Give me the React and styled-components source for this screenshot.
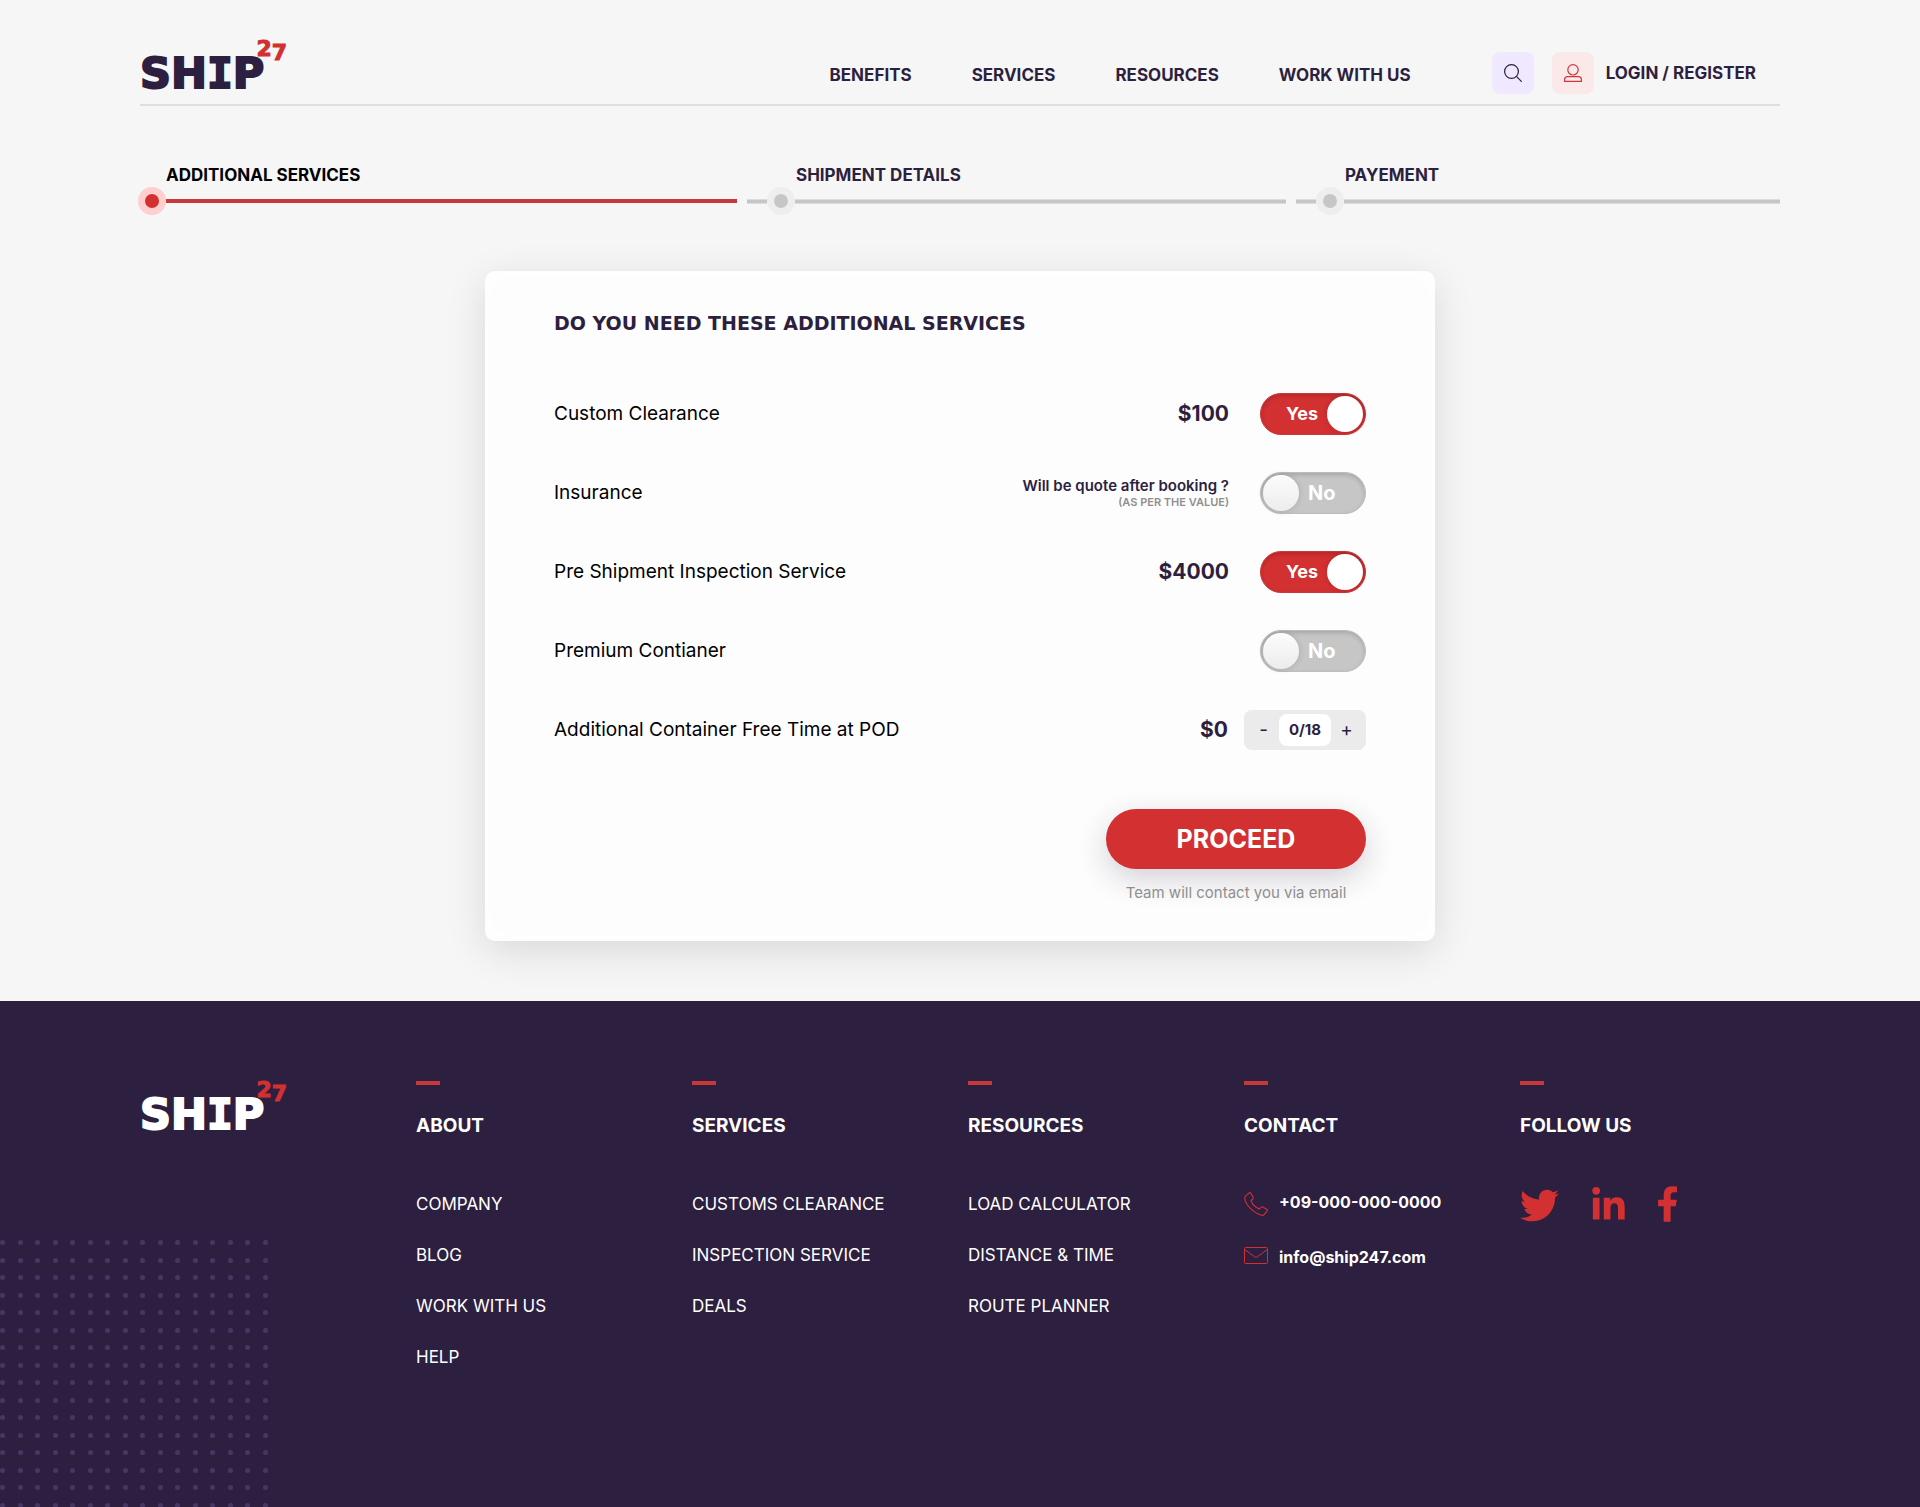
import React, { useState } from "react";
import styled, { createGlobalStyle, css } from "styled-components";
import { FaTwitter, FaLinkedinIn } from "react-icons/fa";

const color = {
  ink: "#2d1f3f",
  red: "#d33031",
  page: "#f6f6f6",
  grey: "#c6c6c6",
  muted: "#8f8f8f",
};

const GlobalStyle = createGlobalStyle`
  * { box-sizing: border-box; }
  body {
    margin: 0;
    background: ${color.page};
    color: ${color.ink};
    font-family: Inter, "Liberation Sans", sans-serif;
    font-size: 17px;
    line-height: 20px;
  }
  a { color: inherit; text-decoration: none; }
  button, input { font: inherit; color: inherit; }
  h1, h2, ul { margin: 0; padding: 0; }
  ul { list-style: none; }
`;

const Container = styled.div`
  width: calc(100% - 80px);
  max-width: 1640px;
  margin: 0 auto;
`;

/* Logo */

const LogoLink = styled.a`
  display: flex;
  align-items: flex-end;
  align-self: flex-start;
  height: 48px;
  color: ${(p) => (p.$light ? "#fff" : color.ink)};
  font-family: "DejaVu Sans", sans-serif;
  font-weight: 700;
`;

const Wordmark = styled.span`
  font-size: 43px;
  line-height: 30px;
  -webkit-text-stroke: 2px currentColor;
`;

const SlabLetter = styled.span`
  font-family: "DejaVu Sans Mono", monospace;
`;

const LogoNumber = styled.span`
  display: flex;
  align-self: flex-start;
  margin-left: -8px;
  color: ${color.red};
  font-size: 22px;
  line-height: 17px;
  -webkit-text-stroke: 1px currentColor;
`;

const LoweredDigit = styled.span`
  padding-top: 4px;
`;

function Logo({ light }) {
  return (
    <LogoLink href="#" $light={light}>
      <Wordmark>
        SH<SlabLetter>I</SlabLetter>P
      </Wordmark>
      <LogoNumber>
        <span>2</span>
        <LoweredDigit>7</LoweredDigit>
      </LogoNumber>
    </LogoLink>
  );
}

/* Header */

const Header = styled.header`
  display: flex;
  align-items: flex-end;
  justify-content: space-between;
  min-height: 106px;
  padding: 40px 24px 10px 0;
  border-bottom: 2px solid #dedede;
`;

const HeaderRight = styled.div`
  display: flex;
  align-items: center;
  font-weight: 700;
`;

const Nav = styled.nav`
  display: flex;
  gap: 60px;
  margin-right: 81px;
  padding-top: 4px;
`;

const IconBox = styled.span`
  display: flex;
  align-items: center;
  justify-content: center;
  width: 42px;
  height: 42px;
  border-radius: 8px;
  background: ${(p) => (p.$tone === "red" ? "#fbe8e8" : "#f0e8ff")};
  color: ${(p) => (p.$tone === "red" ? "#c9393c" : color.ink)};
`;

const SearchButton = styled.button`
  padding: 0;
  border: 0;
  background: none;
  cursor: pointer;
`;

const LoginLink = styled.a`
  display: flex;
  align-items: center;
  gap: 12px;
  margin-left: 18px;
`;

const SearchIcon = () => (
  <svg width="18" height="18" viewBox="0 0 18 18" fill="none" stroke="currentColor" strokeWidth="1.2">
    <circle cx="7.500" cy="7.500" r="6.900" />
    <path d="M12.400 12.400 17.700 17.700" />
  </svg>
);

const UserIcon = () => (
  <svg width="18" height="18" viewBox="0 0 18 18" fill="none" stroke="currentColor" strokeWidth="1.2">
    <circle cx="9" cy="5.800" r="5.200" />
    <path d="M.6 17.400v-1.900a2.800 2.800 0 0 1 2.800-2.800h11.200a2.800 2.800 0 0 1 2.800 2.800v1.900z" />
  </svg>
);

/* Progress steps */

const Steps = styled.ol`
  display: grid;
  grid-template-columns: 597fr 539fr 484fr;
  gap: 10px;
  margin: 0;
  padding: 59px 0 56px;
  list-style: none;
`;

const Step = styled.li`
  display: flex;
  flex-direction: column;
  gap: 2px;
  color: ${(p) => (p.$active ? "#000" : color.ink)};
  font-weight: 700;
`;

const StepLabel = styled.span`
  padding-left: ${(p) => (p.$active ? 26 : 49)}px;
`;

const Track = styled.span`
  display: flex;
  align-items: center;
  margin-left: ${(p) => (p.$active ? -2 : 0)}px;
`;

const TrackLine = styled.span`
  flex: ${(p) => (p.$lead ? "0 0 20px" : "1")};
  height: ${(p) => (p.$active ? 4 : 5)}px;
  background: ${(p) => (p.$active ? "#c9393c" : color.grey)};
  ${(p) =>
    !p.$active &&
    css`
      border: solid #dcdcdc;
      border-width: 1px 0;
    `}
`;

const Dot = styled.span`
  width: 28px;
  height: 28px;
  border: 7px solid ${(p) => (p.$active ? "#ffcfd0" : "#eeeeee")};
  border-radius: 50%;
  background: ${(p) => (p.$active ? color.red : color.grey)};
`;

const steps = [
  { label: "ADDITIONAL SERVICES", active: true },
  { label: "SHIPMENT DETAILS", active: false },
  { label: "PAYEMENT", active: false },
];

/* Services card */

const Card = styled.form`
  width: 100%;
  max-width: 950px;
  margin: 0 auto 60px;
  padding: 40px 69px 38px;
  border-radius: 10px;
  background: #fdfdfd;
  box-shadow: 0 10px 40px rgba(0, 0, 0, 0.12), inset 0 0 24px #fff;
`;

const Title = styled.h1`
  margin-bottom: 39px;
  font-family: "DejaVu Sans", sans-serif;
  font-size: 19px;
  line-height: 24px;
`;

const Row = styled.div`
  display: flex;
  align-items: center;
  height: 79px;
`;

const RowLabel = styled.label`
  flex: 1;
  color: #000;
  font-size: 19px;
  line-height: 24px;
`;

const Price = styled.span`
  margin-right: ${(p) => (p.$tight ? 16 : 31)}px;
  font-size: 21px;
  font-weight: 700;
`;

const Quote = styled.span`
  display: flex;
  flex-direction: column;
  margin-right: 31px;
  font-size: 15px;
  font-weight: 600;
  line-height: 18px;
  text-align: right;
`;

const QuoteNote = styled.small`
  color: ${color.muted};
  font-size: 11px;
  font-weight: 600;
  line-height: 14px;
`;

const SwitchLabel = styled.label`
  position: relative;
  display: flex;
  align-items: center;
  justify-content: ${(p) => (p.$on ? "flex-end" : "flex-start")};
  gap: 9px;
  width: 106px;
  height: 42px;
  padding: 0 2px;
  border: 1px solid ${(p) => (p.$on ? "#c9393c" : "#bdbdbd")};
  border-radius: 21px;
  background: ${(p) => (p.$on ? color.red : color.grey)};
  box-shadow: inset 0 2px 4px rgba(0, 0, 0, 0.16);
  color: #fff;
  font-size: ${(p) => (p.$on ? 18 : 20)}px;
  font-weight: 700;
  cursor: pointer;
`;

const SwitchInput = styled.input`
  position: absolute;
  inset: 0;
  width: 100%;
  height: 100%;
  margin: 0;
  opacity: 0;
  cursor: pointer;
`;

const Knob = styled.span`
  order: ${(p) => (p.$on ? 1 : -1)};
  width: 36px;
  height: 36px;
  border-radius: 50%;
  background: ${(p) => (p.$on ? "#fff" : "linear-gradient(#fcfcfc, #ececec)")};
  box-shadow: 0 0 4px 2px rgba(0, 0, 0, 0.08);
`;

function Switch({ id, on, onChange }) {
  return (
    <SwitchLabel $on={on}>
      <SwitchInput id={id} type="checkbox" checked={on} onChange={onChange} />
      <Knob $on={on} />
      <span>{on ? "Yes" : "No"}</span>
    </SwitchLabel>
  );
}

const Stepper = styled.div`
  display: grid;
  grid-template-columns: 31px 52px 31px;
  padding: 4px;
  border-radius: 8px;
  background: #ebebeb;
`;

const StepperButton = styled.button`
  padding: 0;
  border: 0;
  background: none;
  font-size: 19px;
  cursor: pointer;
`;

const StepperValue = styled.input`
  width: 100%;
  height: 32px;
  padding: 0;
  border: 0;
  border-radius: 8px;
  background: #fff;
  font-size: 15px;
  font-weight: 700;
  text-align: center;
`;

const Submit = styled.div`
  display: flex;
  flex-direction: column;
  gap: 14px;
  width: 260px;
  margin: 40px 0 0 auto;
  color: ${color.muted};
  font-size: 15px;
  text-align: center;
`;

const ProceedButton = styled.button`
  height: 60px;
  border: 0;
  border-radius: 30px;
  background: ${color.red};
  box-shadow: 0 10px 30px rgba(45, 31, 63, 0.2);
  color: #fff;
  font-size: 25px;
  font-weight: 700;
  cursor: pointer;
`;

const services = [
  { id: "customs", label: "Custom Clearance", price: "$100", on: true },
  { id: "insurance", label: "Insurance", quote: true, on: false },
  { id: "inspection", label: "Pre Shipment Inspection Service", price: "$4000", on: true },
  { id: "premium", label: "Premium Contianer", on: false },
];

function ServicesCard() {
  const [enabled, setEnabled] = useState(
    Object.fromEntries(services.map((s) => [s.id, s.on]))
  );
  const [days, setDays] = useState(0);
  const toggle = (id) => setEnabled((old) => ({ ...old, [id]: !old[id] }));

  return (
    <Card onSubmit={(e) => e.preventDefault()}>
      <Title>DO YOU NEED THESE ADDITIONAL SERVICES</Title>
      {services.map((s) => (
        <Row key={s.id}>
          <RowLabel htmlFor={s.id}>{s.label}</RowLabel>
          {s.price && <Price>{s.price}</Price>}
          {s.quote && (
            <Quote>
              Will be quote after booking ?<QuoteNote>(AS PER THE VALUE)</QuoteNote>
            </Quote>
          )}
          <Switch id={s.id} on={enabled[s.id]} onChange={() => toggle(s.id)} />
        </Row>
      ))}
      <Row>
        <RowLabel htmlFor="free-time">Additional Container Free Time at POD</RowLabel>
        <Price $tight>$0</Price>
        <Stepper>
          <StepperButton type="button" onClick={() => setDays(Math.max(0, days - 1))}>
            -
          </StepperButton>
          <StepperValue id="free-time" readOnly value={`${days}/18`} />
          <StepperButton type="button" onClick={() => setDays(Math.min(18, days + 1))}>
            +
          </StepperButton>
        </Stepper>
      </Row>
      <Submit>
        <ProceedButton type="submit">PROCEED</ProceedButton>
        <span>Team will contact you via email</span>
      </Submit>
    </Card>
  );
}

/* Footer */

const FooterBar = styled.footer`
  position: relative;
  padding: 80px 0 138px;
  background: ${color.ink};
  color: #fff;
`;

const DotField = styled.svg`
  position: absolute;
  left: 0;
  bottom: 0;
`;

const FooterGrid = styled(Container)`
  position: relative;
  display: grid;
  grid-template-columns: repeat(6, 1fr);
  gap: 16px;
`;

const Column = styled.section`
  &::before {
    content: "";
    display: block;
    width: 24px;
    height: 4px;
    background: #c9393c;
  }
`;

const ColumnTitle = styled.h2`
  margin: 29px 0 54px;
  font-size: 19px;
  font-weight: 700;
  line-height: 24px;
`;

const LinkList = styled.ul`
  display: flex;
  flex-direction: column;
  gap: 27px;
  line-height: 24px;
  white-space: nowrap;
`;

const ContactList = styled(LinkList)`
  gap: 31px;
  font-size: 16px;
  font-weight: 700;
  line-height: 20px;
`;

const ContactLink = styled.a`
  display: flex;
  align-items: flex-start;
  gap: 11px;

  svg {
    color: ${color.red};
  }
`;

const Social = styled.div`
  display: flex;
  align-items: center;
  gap: 31px;
  margin-top: -6px;
  color: ${color.red};

  a,
  svg {
    display: block;
  }

  a:last-child {
    align-self: flex-start;
  }
`;

const PhoneIcon = () => (
  <svg width="24" height="24" viewBox="0 0 24 24" fill="none" stroke="currentColor" strokeWidth="1.1">
    <path d="M6.700.9 9 5c.4.700.3 1.500-.2 2L7 8.800c1.200 3.100 5 6.900 8.300 8.200l1.600-1.700c.5-.5 1.300-.6 1.900-.3l4.300 2.400c.4.300.5.800.2 1.200l-3 3.700c-.7.900-1.700 1.200-2.800 1C10.500 21.500 1.500 13 .8 6.800.6 5.600 1 4.500 1.800 3.800L5.500.8c.4-.3.900-.3 1.200.1z" />
  </svg>
);

const MailIcon = () => (
  <svg width="24" height="17" viewBox="0 0 24 17" fill="none" stroke="currentColor" strokeWidth="1">
    <rect x=".5" y=".5" width="23" height="16" rx="1" />
    <path d="M.8 2.500 10.500 9.800c1 .7 2 .7 3 0L23.200 2.500" />
  </svg>
);

const FacebookIcon = () => (
  <svg width="19" height="36" viewBox="22 0 275 512" fill="currentColor">
    <path d="M279.140 288l14.220-92.660h-88.910v-60.130c0-25.350 12.420-50.060 52.240-50.060h40.420V6.260S260.430 0 225.360 0c-73.220 0-121.080 44.380-121.080 124.720v70.620H22.890V288h81.390v224h100.170V288z" />
  </svg>
);

const linkColumns = [
  { title: "ABOUT", links: ["COMPANY", "BLOG", "WORK WITH US", "HELP"] },
  { title: "SERVICES", links: ["CUSTOMS CLEARANCE", "INSPECTION SERVICE", "DEALS"] },
  { title: "RESOURCES", links: ["LOAD CALCULATOR", "DISTANCE & TIME", "ROUTE PLANNER"] },
];

function Footer() {
  return (
    <FooterBar>
      <DotField width="268" height="267" aria-hidden="true">
        <defs>
          <pattern id="dots" width="35" height="35" patternUnits="userSpaceOnUse">
            {[2.5, 20.5].map((y) =>
              [2.5, 20.5].map((x) => (
                <circle key={`${x}-${y}`} cx={x} cy={y} r="2.500" fill="#463663" />
              ))
            )}
          </pattern>
        </defs>
        <rect width="268" height="267" fill="url(#dots)" />
      </DotField>
      <FooterGrid>
        <Logo light />
        {linkColumns.map((c) => (
          <Column key={c.title}>
            <ColumnTitle>{c.title}</ColumnTitle>
            <LinkList>
              {c.links.map((l) => (
                <li key={l}>
                  <a href="#">{l}</a>
                </li>
              ))}
            </LinkList>
          </Column>
        ))}
        <Column>
          <ColumnTitle>CONTACT</ColumnTitle>
          <ContactList>
            <li>
              <ContactLink href="tel:+090000000000">
                <PhoneIcon />
                +09-000-000-0000
              </ContactLink>
            </li>
            <li>
              <ContactLink href="mailto:info@ship247.com">
                <MailIcon />
                info@ship247.com
              </ContactLink>
            </li>
          </ContactList>
        </Column>
        <Column>
          <ColumnTitle>FOLLOW US</ColumnTitle>
          <Social>
            <a href="#" aria-label="Twitter">
              <FaTwitter size={39} />
            </a>
            <a href="#" aria-label="LinkedIn">
              <FaLinkedinIn size={37} />
            </a>
            <a href="#" aria-label="Facebook">
              <FacebookIcon />
            </a>
          </Social>
        </Column>
      </FooterGrid>
    </FooterBar>
  );
}

export default function App() {
  return (
    <>
      <GlobalStyle />
      <Container>
        <Header>
          <Logo />
          <HeaderRight>
            <Nav>
              <a href="#">BENEFITS</a>
              <a href="#">SERVICES</a>
              <a href="#">RESOURCES</a>
              <a href="#">WORK WITH US</a>
            </Nav>
            <SearchButton type="button" aria-label="Search">
              <IconBox>
                <SearchIcon />
              </IconBox>
            </SearchButton>
            <LoginLink href="#">
              <IconBox $tone="red">
                <UserIcon />
              </IconBox>
              LOGIN / REGISTER
            </LoginLink>
          </HeaderRight>
        </Header>
        <Steps>
          {steps.map((s) => (
            <Step key={s.label} $active={s.active}>
              <StepLabel $active={s.active}>{s.label}</StepLabel>
              <Track $active={s.active}>
                {!s.active && <TrackLine $lead />}
                <Dot $active={s.active} />
                <TrackLine $active={s.active} />
              </Track>
            </Step>
          ))}
        </Steps>
        <ServicesCard />
      </Container>
      <Footer />
    </>
  );
}
